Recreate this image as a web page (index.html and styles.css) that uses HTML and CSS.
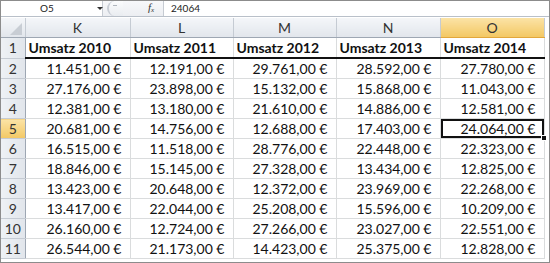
FILE: index.html
```html
<!DOCTYPE html>
<html lang="de">
<head>
    <meta charset="UTF-8">
    <title>Umsatz 2010 - 2014</title>
    <link rel="stylesheet" href="styles.css">
</head>
<body>
    <div class="sheet">
        <!-- Bearbeitungsleiste -->
        <div class="formula-bar">
            <div class="name-box">O5<span class="arrow"></span></div>
            <div class="fx-area">
                <span class="pill"><span class="pill-dash"></span></span>
                <span class="fx">f<sub>x</sub></span>
            </div>
            <div class="formula-input">24064</div>
        </div>

        <table class="grid">
            <colgroup>
                <col class="col-head">
                <col class="col-k">
                <col class="col-std">
                <col class="col-std">
                <col class="col-n">
                <col class="col-n">
            </colgroup>
            <thead>
                <tr>
                    <th class="corner"></th>
                    <th>K</th>
                    <th>L</th>
                    <th>M</th>
                    <th>N</th>
                    <th class="active">O</th>
                </tr>
            </thead>
            <tbody>
                <tr class="title-row">
                    <th>1</th>
                    <td>Umsatz 2010</td>
                    <td>Umsatz 2011</td>
                    <td>Umsatz 2012</td>
                    <td>Umsatz 2013</td>
                    <td>Umsatz 2014</td>
                </tr>
                <tr>
                    <th>2</th>
                    <td>11.451,00 €</td>
                    <td>12.191,00 €</td>
                    <td>29.761,00 €</td>
                    <td>28.592,00 €</td>
                    <td>27.780,00 €</td>
                </tr>
                <tr>
                    <th>3</th>
                    <td>27.176,00 €</td>
                    <td>23.898,00 €</td>
                    <td>15.132,00 €</td>
                    <td>15.868,00 €</td>
                    <td>11.043,00 €</td>
                </tr>
                <tr>
                    <th>4</th>
                    <td>12.381,00 €</td>
                    <td>13.180,00 €</td>
                    <td>21.610,00 €</td>
                    <td>14.886,00 €</td>
                    <td>12.581,00 €</td>
                </tr>
                <tr>
                    <th class="active">5</th>
                    <td>20.681,00 €</td>
                    <td>14.756,00 €</td>
                    <td>12.688,00 €</td>
                    <td>17.403,00 €</td>
                    <td class="selected">24.064,00 €</td>
                </tr>
                <tr>
                    <th>6</th>
                    <td>16.515,00 €</td>
                    <td>11.518,00 €</td>
                    <td>28.776,00 €</td>
                    <td>22.448,00 €</td>
                    <td>22.323,00 €</td>
                </tr>
                <tr>
                    <th>7</th>
                    <td>18.846,00 €</td>
                    <td>15.145,00 €</td>
                    <td>27.328,00 €</td>
                    <td>13.434,00 €</td>
                    <td>12.825,00 €</td>
                </tr>
                <tr>
                    <th>8</th>
                    <td>13.423,00 €</td>
                    <td>20.648,00 €</td>
                    <td>12.372,00 €</td>
                    <td>23.969,00 €</td>
                    <td>22.268,00 €</td>
                </tr>
                <tr>
                    <th>9</th>
                    <td>13.417,00 €</td>
                    <td>22.044,00 €</td>
                    <td>25.208,00 €</td>
                    <td>15.596,00 €</td>
                    <td>10.209,00 €</td>
                </tr>
                <tr>
                    <th>10</th>
                    <td>26.160,00 €</td>
                    <td>12.724,00 €</td>
                    <td>27.266,00 €</td>
                    <td>23.027,00 €</td>
                    <td>22.551,00 €</td>
                </tr>
                <tr>
                    <th>11</th>
                    <td>26.544,00 €</td>
                    <td>21.173,00 €</td>
                    <td>14.423,00 €</td>
                    <td>25.375,00 €</td>
                    <td>12.828,00 €</td>
                </tr>
            </tbody>
        </table>
    </div>
</body>
</html>
```

FILE: styles.css
```css
body {
    margin: 0;
    padding: 0;
    background: white;
    font-family: Lato, "Liberation Sans", sans-serif;
}

.sheet {
    width: 548px;
    height: 261px;
    border: 1px solid #8c8c8c;
    overflow: hidden;
    background: white;
}

/* Bearbeitungsleiste */
.formula-bar {
    display: flex;
    height: 15px;
    border-bottom: 1px solid #b9c0c9;
    font-size: 10px;
    line-height: 15px;
    color: #222;
}

.name-box {
    width: 102px;
    padding-left: 39px;
    box-sizing: border-box;
    position: relative;
    border-right: 1px solid #c6cbd2;
}

.arrow {
    position: absolute;
    left: 96px;
    top: 6px;
    border-left: 3px solid transparent;
    border-right: 3px solid transparent;
    border-top: 3px solid #333;
}

.fx-area {
    width: 60px;
    display: flex;
    align-items: center;
    background: linear-gradient(#f7f8fa, #eceef2);
    border-right: 1px solid #c6cbd2;
}

.pill {
    width: 14px;
    height: 15px;
    margin-left: 4px;
    border-left: 2px solid #c9ced6;
    border-radius: 8px 0 0 8px;
    background: linear-gradient(#fbfcfd, #e9ecf0);
    position: relative;
}

.pill-dash {
    position: absolute;
    left: 4px;
    top: 4px;
    width: 4px;
    height: 1px;
    background: #b0b6be;
}

.fx {
    margin-left: 25px;
    font-family: "Liberation Serif", serif;
    font-style: italic;
    font-size: 11px;
    color: #333;
}

.fx sub {
    font-size: 7px;
    vertical-align: -1px;
}

.formula-input {
    flex: 1;
    padding-left: 7px;
}

/* Tabelle */
.grid {
    margin-top: 1px;
    border-collapse: collapse;
    table-layout: fixed;
    width: 543px;
    font-size: 14px;
    color: #111;
}

.col-head { width: 24px; }
.col-k { width: 105px; }
.col-std { width: 103px; }
.col-n { width: 104px; }

.grid th,
.grid td {
    height: 19px;
    padding: 0;
    white-space: nowrap;
    overflow: hidden;
}

.grid thead th {
    font-weight: normal;
    font-size: 14px;
    color: #333;
    background: linear-gradient(#f4f6f9, #e2e6ec);
    border-right: 1px solid #c5cbd3;
    border-bottom: 1px solid #9ea7b3;
    text-align: center;
}

.grid thead th.active {
    background: linear-gradient(#fbe3a6, #f3c864);
    border-bottom-color: #e2a73b;
}

.grid .corner {
    position: relative;
}

/* kleines Dreieck in der Ecke */
.grid .corner::after {
    content: "";
    position: absolute;
    right: 3px;
    bottom: 2px;
    border-left: 12px solid transparent;
    border-bottom: 12px solid #c8cdd4;
}

.grid tbody th {
    font-weight: normal;
    color: #333;
    background: linear-gradient(to right, #eef1f5, #e1e5eb);
    border-right: 1px solid #9ea7b3;
    border-bottom: 1px solid #c5cbd3;
    text-align: center;
}

.grid tbody th.active {
    background: linear-gradient(#fbe3a6, #f3c864);
}

.grid td {
    border-right: 1px solid #dadcdd;
    border-bottom: 1px solid #dadcdd;
    text-align: right;
    padding-right: 8px;
}

.title-row td {
    font-weight: bold;
    text-align: left;
    padding-left: 3px;
    padding-right: 0;
    height: 19px;
    border-bottom: 2px solid #111;
}

.grid td.selected {
    position: relative;
    overflow: visible;
    box-shadow: inset 0 0 0 2px #111;
}

.grid td.selected::after {
    content: "";
    position: absolute;
    right: -3px;
    bottom: -3px;
    width: 4px;
    height: 4px;
    background: #111;
    border: 1px solid white;
}
```
